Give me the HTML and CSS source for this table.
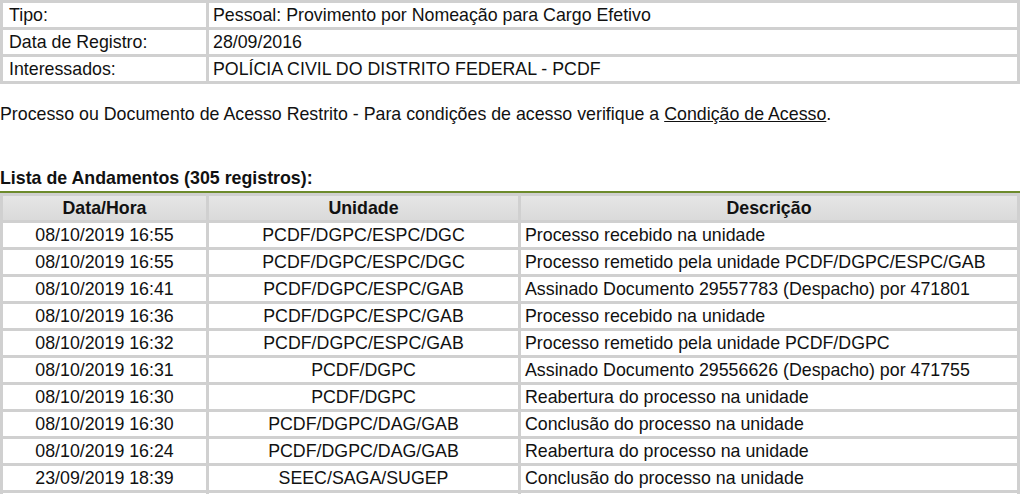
FILE: index.html
```html
<!DOCTYPE html>
<html lang="pt-BR">
<head>
<meta charset="utf-8">
<title>Processo</title>
<link rel="stylesheet" href="styles.css">
</head>
<body>
<table class="grid info">
  <colgroup><col class="c-label"><col></colgroup>
  <tr><td class="label">Tipo:</td><td>Pessoal: Provimento por Nomeação para Cargo Efetivo</td></tr>
  <tr><td class="label">Data de Registro:</td><td>28/09/2016</td></tr>
  <tr><td class="label">Interessados:</td><td>POLÍCIA CIVIL DO DISTRITO FEDERAL - PCDF</td></tr>
</table>

<p class="notice">Processo ou Documento de Acesso Restrito - Para condições de acesso verifique a <a href="#" class="link">Condição de Acesso</a>.</p>

<h2 class="caption">Lista de Andamentos (305 registros):</h2>
<div class="rule"></div>
<table class="grid andamentos">
  <colgroup><col class="c-date"><col class="c-unit"><col></colgroup>
  <thead>
    <tr><th>Data/Hora</th><th>Unidade</th><th>Descrição</th></tr>
  </thead>
  <tbody>
    <tr><td class="center">08/10/2019 16:55</td><td class="center">PCDF/DGPC/ESPC/DGC</td><td>Processo recebido na unidade</td></tr>
    <tr><td class="center">08/10/2019 16:55</td><td class="center">PCDF/DGPC/ESPC/DGC</td><td>Processo remetido pela unidade PCDF/DGPC/ESPC/GAB</td></tr>
    <tr><td class="center">08/10/2019 16:41</td><td class="center">PCDF/DGPC/ESPC/GAB</td><td>Assinado Documento 29557783 (Despacho) por 471801</td></tr>
    <tr><td class="center">08/10/2019 16:36</td><td class="center">PCDF/DGPC/ESPC/GAB</td><td>Processo recebido na unidade</td></tr>
    <tr><td class="center">08/10/2019 16:32</td><td class="center">PCDF/DGPC/ESPC/GAB</td><td>Processo remetido pela unidade PCDF/DGPC</td></tr>
    <tr><td class="center">08/10/2019 16:31</td><td class="center">PCDF/DGPC</td><td>Assinado Documento 29556626 (Despacho) por 471755</td></tr>
    <tr><td class="center">08/10/2019 16:30</td><td class="center">PCDF/DGPC</td><td>Reabertura do processo na unidade</td></tr>
    <tr><td class="center">08/10/2019 16:30</td><td class="center">PCDF/DGPC/DAG/GAB</td><td>Conclusão do processo na unidade</td></tr>
    <tr><td class="center">08/10/2019 16:24</td><td class="center">PCDF/DGPC/DAG/GAB</td><td>Reabertura do processo na unidade</td></tr>
    <tr><td class="center">23/09/2019 18:39</td><td class="center">SEEC/SAGA/SUGEP</td><td>Conclusão do processo na unidade</td></tr>
    <tr><td></td><td></td><td></td></tr>
  </tbody>
</table>
</body>
</html>
```

FILE: styles.css
```css
html, body {
  margin: 0;
  padding: 0;
  background: #fff;
}

body {
  font-family: "Liberation Sans", Arial, sans-serif;
  font-size: 17.8px;
  line-height: 20px;
  color: #111;
}

.grid {
  width: 1020px;
  table-layout: fixed;
  border-collapse: separate;
  border-spacing: 3px;
  background: #d0d0d0;
}

.grid td,
.grid th {
  height: 24px;
  box-sizing: border-box;
  padding: 0 4px;
  background: #fff;
  vertical-align: middle;
  white-space: nowrap;
  overflow: hidden;
}

.c-label,
.c-date {
  width: 203px;
}

.c-unit {
  width: 309px;
}

.info td.label {
  padding-left: 6px;
}

.notice {
  margin: 20px 0 0 0;
}

.link {
  color: #111;
  text-decoration: underline;
}

.caption {
  margin: 44px 0 0 0;
  font-size: 17.8px;
  line-height: 20px;
  font-weight: bold;
}

.rule {
  margin-top: 3px;
  height: 2px;
  width: 1020px;
  background: #6d8b2c;
}

.andamentos th {
  background: linear-gradient(#e6e6e6, #dadada);
  font-weight: bold;
  text-align: center;
}

.andamentos td.center {
  text-align: center;
}
```
